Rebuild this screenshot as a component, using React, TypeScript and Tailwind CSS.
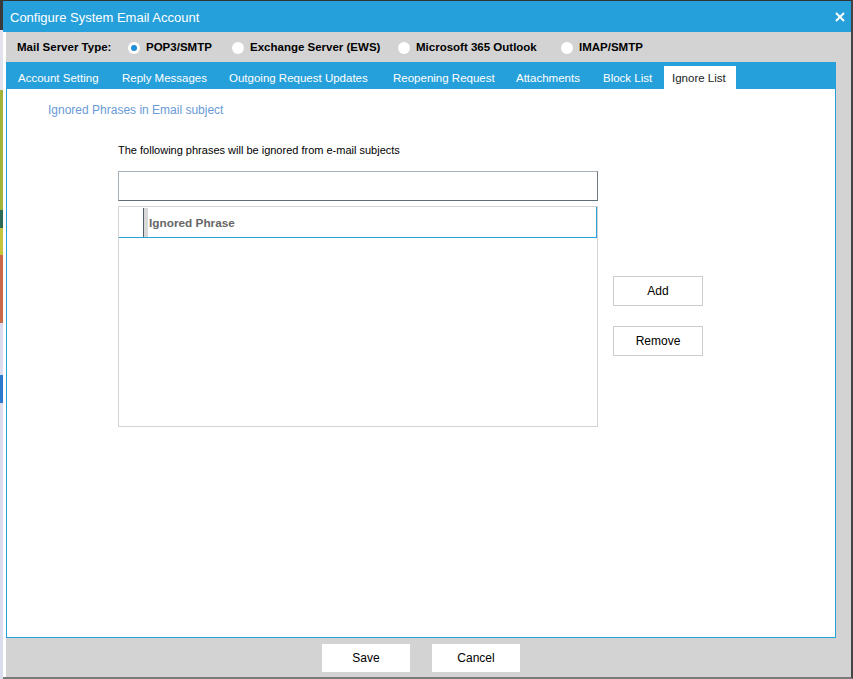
import React from "react";

const font = { fontFamily: '"Liberation Sans", Arial, sans-serif' };

function Radio({ checked, label, w }: { checked?: boolean; label: string; w: string }) {
  return (
    <div className={`flex items-center ${w}`}>
      <div className="w-[12px] h-[12px] rounded-full bg-white flex items-center justify-center">
        {checked && <div className="w-[6px] h-[6px] rounded-full bg-[#1e8fd6]" />}
      </div>
      <span className="ml-[6px] text-[11.5px] font-bold text-black">{label}</span>
    </div>
  );
}

const tabs: [string, string][] = [
  ["Account Setting", "w-[104px]"],
  ["Reply Messages", "w-[107px]"],
  ["Outgoing Request Updates", "w-[164px]"],
  ["Reopening Request", "w-[123px]"],
  ["Attachments", "w-[87px]"],
  ["Block List", "w-[69px]"],
];

export default function App() {
  return (
    <div className="w-[853px] h-[679px] flex bg-white overflow-hidden" style={font}>
      {/* background app strip */}
      <div className="w-[3px] h-full flex flex-col">
        <div className="h-[30px] bg-[#3a3a3a]" />
        <div className="h-[60px] bg-[#e2e2ee]" />
        <div className="h-[120px] bg-[#a3b23a]" />
        <div className="h-[18px] bg-[#2c6a58]" />
        <div className="h-[27px] bg-[#c5c43c]" />
        <div className="h-[68px] bg-[#c8694c]" />
        <div className="h-[52px] bg-[#dcdcef]" />
        <div className="h-[28px] bg-[#2a7bd0]" />
        <div className="flex-1 bg-[#dcdcef]" />
      </div>

      {/* dialog */}
      <div className="flex-1 flex flex-col border-t border-t-[#333] border-r-2 border-r-[#444] border-b-2 border-b-[#7a7a7a]">
        <div className="h-[31px] bg-[#26a0da] flex items-center justify-between pl-[7px] pr-[6px] pt-[3px]">
          <span className="text-white text-[13px]">Configure System Email Account</span>
          <svg width="10" height="10" viewBox="0 0 10 10" className="-mt-[3px]">
            <path d="M1 1 L9 9 M9 1 L1 9" stroke="#ffffff" strokeWidth="2" />
          </svg>
        </div>

        <div className="flex-1 flex flex-col bg-[#d3d3d3] border-l-[3px] border-l-white">
          <div className="h-[30px] flex items-center pl-[11px] pt-[2px]">
            <span className="w-[111px] text-[11.5px] font-bold text-black">Mail Server Type:</span>
            <div className="flex items-center">
              <Radio checked label="POP3/SMTP" w="w-[104px]" />
              <Radio label="Exchange Server (EWS)" w="w-[166px]" />
              <Radio label="Microsoft 365 Outlook" w="w-[163px]" />
              <Radio label="IMAP/SMTP" w="w-[100px]" />
            </div>
          </div>

          <div className="flex-1 flex flex-col mr-[15px]">
            <div className="h-[27px] bg-[#26a0da] flex items-end pl-[4px]">
              {tabs.map(([t, w]) => (
                <div key={t} className={`h-[23px] pl-[8px] pt-[2px] flex items-center text-white text-[11.5px] whitespace-nowrap ${w}`}>
                  {t}
                </div>
              ))}
              <div className="h-[23px] w-[72px] pl-[8px] pt-[2px] flex items-center bg-white text-[#222] text-[11.5px]">
                Ignore List
              </div>
            </div>

            <div className="flex-1 bg-white border-l border-r border-b border-[#26a0da] flex flex-col">
              <div className="mt-[13px] ml-[41px] text-[12px] leading-[16px] text-[#6a9bd6]">
                Ignored Phrases in Email subject
              </div>
              <div className="flex ml-[111px] mt-[25px]">
                <div className="flex flex-col w-[480px]">
                  <div className="text-[11px] leading-[14px] text-black">
                    The following phrases will be ignored from e-mail subjects
                  </div>
                  <div className="mt-[14px] h-[30px] border border-[#a7afb6] border-b-[#5f6d79] border-r-[#6d7a85] bg-white" />
                  <div className="mt-[5px] h-[221px] border border-[#d4d4d4] flex flex-col">
                    <div className="h-[31px] flex border-b border-b-[#26a0da] border-r border-r-[#26a0da]">
                      <div className="w-[24px]" />
                      <div className="w-[1px] bg-[#555f6a] mt-[1px]" />
                      <div className="w-[4px] bg-[#d8d8d8] mt-[1px]" />
                      <div className="pl-[1px] pt-[4px] flex items-center text-[11.8px] font-bold text-[#666]">
                        Ignored Phrase
                      </div>
                    </div>
                  </div>
                </div>
                <div className="flex flex-col ml-[15px] mt-[133px] gap-[20px]">
                  <div className="w-[90px] h-[30px] border border-[#cccccc] bg-white flex items-center justify-center text-[12px] text-black">
                    Add
                  </div>
                  <div className="w-[90px] h-[30px] border border-[#cccccc] bg-white flex items-center justify-center text-[12px] text-black">
                    Remove
                  </div>
                </div>
              </div>
            </div>
          </div>

          <div className="h-[39px] flex items-center pl-[316px] gap-[22px] pt-[1px]">
            <div className="w-[88px] h-[28px] bg-white flex items-center justify-center text-[12px] text-black">
              Save
            </div>
            <div className="w-[88px] h-[28px] bg-white flex items-center justify-center text-[12px] text-black">
              Cancel
            </div>
          </div>
        </div>
      </div>
    </div>
  );
}
